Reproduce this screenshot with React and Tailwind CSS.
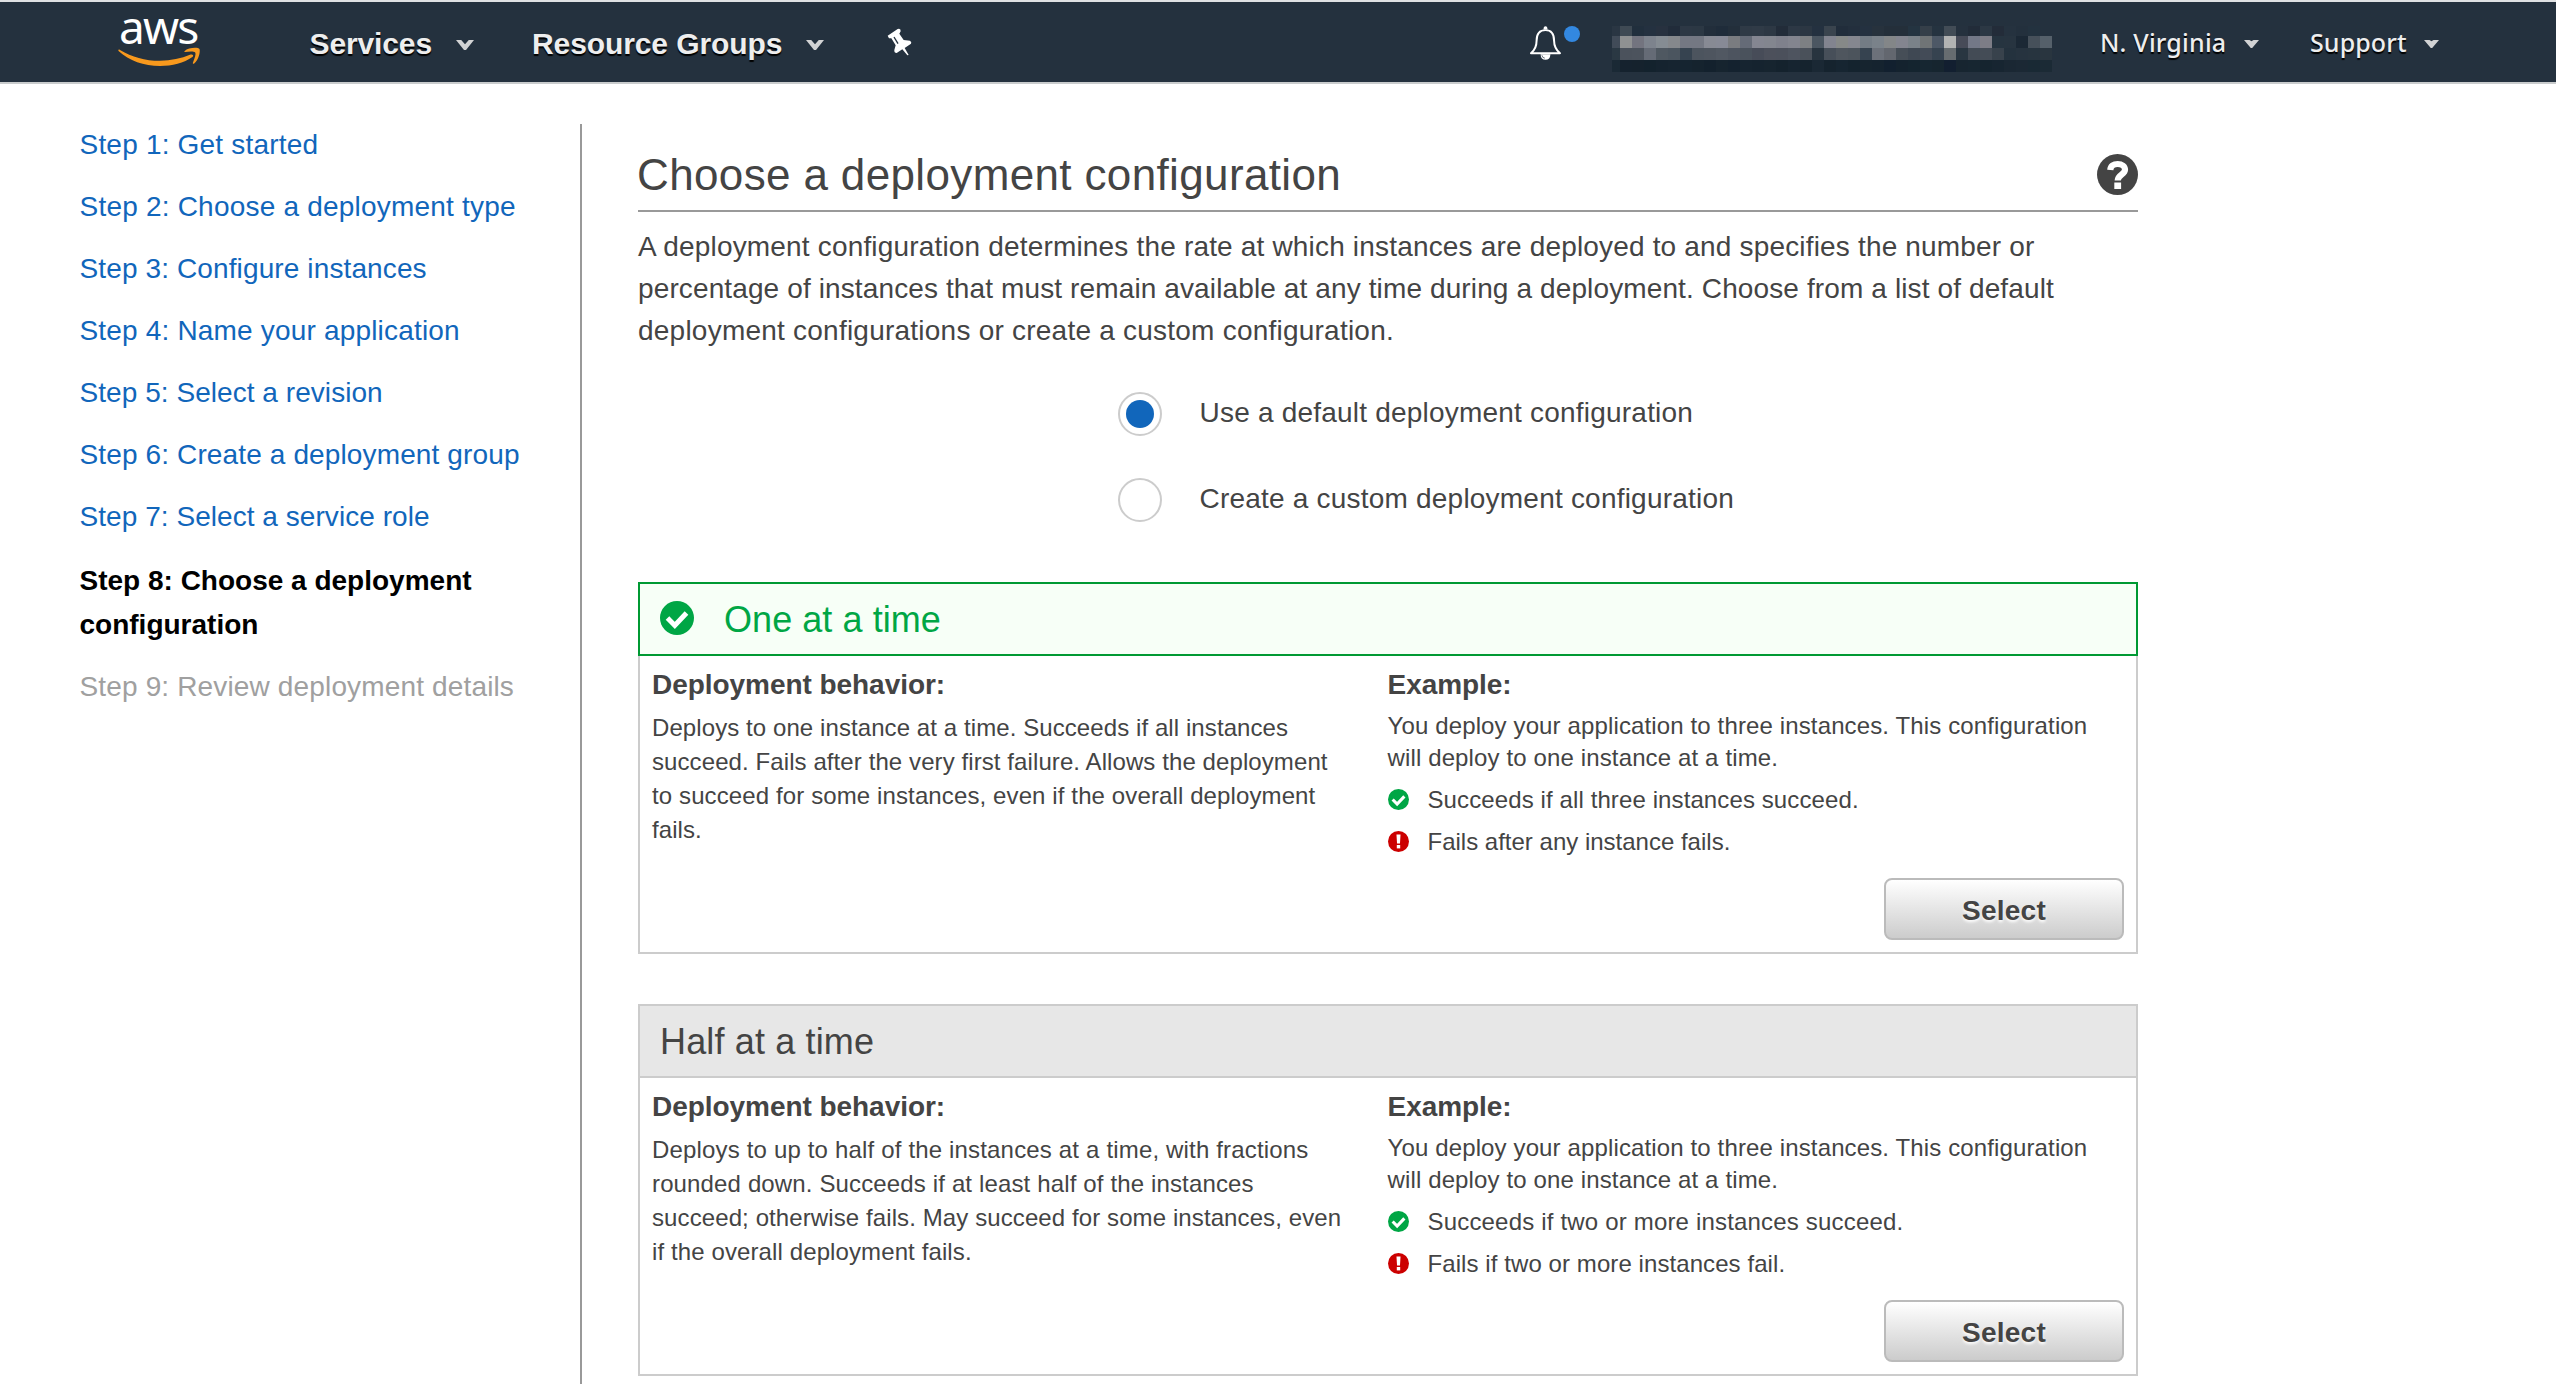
import React from "react";

const TOP = ["#2a3643","#3f4a54","#212f3d","#243140","#27313f","#212c3a","#2d3845","#2c3844","#222e3b","#1f2c3a","#232f3b","#2f3a46","#303b47","#2d3844","#222c39","#2d3845","#2c3743","#243140","#3a444e","#212d3b","#232f3d","#243140","#27323d","#242f3a","#242f3a","#243441","#353f49","#253340","#424c56","#25313e","#222c39","#2c3844","#232c39","#25323f","#23303d","#23323f","#24313e"];
const MID = ["#414b58","#8f9192","#73747f","#7d838d","#858c93","#85888c","#747883","#747883","#878a94","#878a96","#7a7c80","#656b77","#848691","#83868f","#7f818c","#83858f","#7d8083","#4b5661","#82848f","#868988","#85878f","#737c85","#7a828a","#838688","#83858f","#7a8289","#707476","#4d5866","#b2b3b3","#474b58","#737887","#7d7d86","#263440","#273440","#1b2835","#46505a","#55606a"];
const LOW = ["#2a3843","#4b525c","#4c535d","#656b76","#4f5861","#4b555f","#364350","#4c545e","#4e555f","#515862","#4d545f","#4a525c","#474c58","#4c505b","#4b505b","#4e545f","#4a515a","#28343f","#474f59","#4f565e","#4c545c","#364350","#6c717a","#63676f","#464e57","#3f4853","#434b57","#364350","#666c70","#293641","#434b55","#444c56","#38424c","#24323e","#26333f","#27343f","#29353f"];
const BOT = ["#1a2935","#15222e","#15222d","#13222d","#15232f","#162430","#152430","#15232e","#13212d","#16242f","#14222f","#162430","#15232f","#16242f","#14222d","#162430","#15232e","#1a2834","#15232e","#162531","#14232e","#16242f","#15232f","#12202f","#14222e","#14242f","#162631","#16252f","#121f30","#172530","#172631","#15242f","#172531","#1a2733","#1b2834","#192934","#1b2a35"];

function Mosaic() {
  return (
    <div className="mt-6 ml-8 h-[46px] w-[440px] shrink-0">
      {[TOP, MID, LOW, BOT].map((row, r) => (
        <div key={r} className={r === 0 ? "flex h-[10px]" : "flex h-3"}>
          {row.map((c, i) => (
            <div key={i} className={i === 0 ? "h-full w-2" : "h-full w-3"} style={{ backgroundColor: c }} />
          ))}
        </div>
      ))}
    </div>
  );
}

function Logo() {
  return (
    <div className="flex h-[80px] w-[84px] shrink-0 flex-col [text-shadow:none]">
      <div className="h-[41px] pl-[1px] font-['Noto_Sans',sans-serif] text-[46px] leading-[48px] tracking-[-1.900px] whitespace-nowrap text-white">aws</div>
      <svg className="mt-[3px] shrink-0" width="84" height="22" viewBox="0 30 84 22">
        <g fill="#f8991d">
          <path d="M.3 34.400C.2 33.500 1 33.300 2 33.900 14 41 27 44.800 42 44.800 53 44.800 63 42.600 72.600 38.600 74.600 37.800 76.200 39.600 74.400 41 66 47 54 50 42 50 26 50 11 44.500 .8 35.200Z" />
          <path d="M66.500 35.200C70 31.600 80 31 81.500 33 82.600 36 80.500 44 76.200 47.400 75.200 48 74.500 47.500 75 46.400 76.500 43 78.200 38 77.200 36.600 75.800 35 70.500 35.700 67.200 36 66.300 36 66 35.800 66.500 35.200Z" />
        </g>
      </svg>
    </div>
  );
}

function NavCaret() {
  return (
    <svg className="mt-[38px] shrink-0" width="18" height="10" viewBox="0 0 18 10">
      <path d="M0 0H5.200L9 4.200 12.800 0H18L10 10H8Z" fill="#d2d3d4" />
    </svg>
  );
}

function SmallCaret() {
  return (
    <svg className="mt-[38px] shrink-0" width="15" height="8" viewBox="0 0 15 8">
      <path d="M0 0H5.500L7.500 1.200 9.500 0H15L8.200 8H6.800Z" fill="#d2d3d4" />
    </svg>
  );
}

function Pin() {
  return (
    <svg className="mt-[26px] ml-[62.500px] shrink-0" width="25" height="28" viewBox="320 84 75 84">
      <path d="M322 107L352 87Q362 84 361 94L357 101 370 120 389 122Q395 126 392 131L373 144 385 165 381 166 366 148 349 159Q341 159 342 150L346 136 333 115 326 115Z" fill="#fff" />
      <path d="M341 111L353 131" stroke="#24313e" strokeWidth="4" fill="none" />
    </svg>
  );
}

function Bell() {
  return (
    <svg className="mt-[23px] shrink-0" width="33" height="36" viewBox="28 75 100 108">
      <path d="M34 160C46 150 51 140 51 122 51 100 61 90 78 90 95 90 104 100 104 122 104 140 110 150 122 160Z" fill="none" stroke="#fff" strokeWidth="6" strokeLinejoin="round" />
      <path d="M72 88Q72 78 78 78 84 78 84 88Z" fill="#fff" />
      <path d="M63 163H93Q92 180 78 180 64 180 63 163Z" fill="#fff" />
      <path d="M67 166Q68 174 76 175" stroke="#24313e" strokeWidth="2" fill="none" />
    </svg>
  );
}

function Header() {
  return (
    <header className="flex h-[84px] items-start border-t-2 border-b-2 border-t-[#dfe1e3] border-b-[#c9cccd] bg-[#24313e] pr-[117.500px] pl-[118px] text-[#eeeeee] [text-shadow:0_2px_1px_#000]">
      <Logo />
      <div className="ml-[107.500px] w-[146.500px] text-[30px] leading-[84px] font-bold tracking-[-0.12px]">Services</div>
      <NavCaret />
      <div className="ml-[58px] w-[274px] text-[30px] leading-[84px] font-bold tracking-[-0.1px] whitespace-nowrap">Resource Groups</div>
      <NavCaret />
      <Pin />
      <div className="ml-auto flex items-start font-['Noto_Sans',sans-serif] text-[25px] leading-[80px] whitespace-nowrap">
        <Bell />
        <span className="mt-6 ml-[2px] size-4 shrink-0 rounded-full bg-[#3388e0]" />
        <Mosaic />
        <div className="ml-[48.500px] w-[143.500px] font-medium tracking-[0.2px]">N. Virginia</div>
        <SmallCaret />
        <div className="ml-[51.500px] w-[113.500px] font-medium tracking-[0.1px]">Support</div>
        <SmallCaret />
      </div>
    </header>
  );
}

const STEPS = [
  ["Step 1: Get started", "tracking-[0.2px]"],
  ["Step 2: Choose a deployment type", "tracking-[0.21px]"],
  ["Step 3: Configure instances", "tracking-[0.12px]"],
  ["Step 4: Name your application", "tracking-[0.18px]"],
  ["Step 5: Select a revision", "tracking-[0.05px]"],
  ["Step 6: Create a deployment group", "tracking-[0.13px]"],
  ["Step 7: Select a service role", "tracking-[0.05px]"],
];

function Sidebar() {
  return (
    <nav className="flex w-[580px] shrink-0 flex-col pt-[30px] pl-[79.500px] text-[28px] leading-[44px]">
      {STEPS.map(([label, tracking]) => (
        <a key={label} className={`py-[9px] text-[#1166bb] ${tracking}`}>{label}</a>
      ))}
      <div className="mt-0.5 py-[9px] font-bold text-black">
        Step 8: Choose a deployment
        <br />
        configuration
      </div>
      <div className="py-[9px] tracking-[0.15px] text-[#a0a0a0]">Step 9: Review deployment details</div>
    </nav>
  );
}

function CheckIcon({ className }) {
  return (
    <svg className={className} viewBox="0 0 34 34">
      <circle cx="17" cy="17" r="17" fill="#00a645" />
      <path d="M7.500 17L14.800 24.500 26.500 12" fill="none" stroke="#fff" strokeWidth="5" />
    </svg>
  );
}

function AlertIcon({ className }) {
  return (
    <svg className={className} viewBox="0 0 21 21">
      <circle cx="10.500" cy="10.500" r="10.500" fill="#cc0000" />
      <path d="M8.500 3.500H12.500L12 12.500H9Z" fill="#fff" />
      <rect x="8.800" y="14" width="3.400" height="3.400" fill="#fff" />
    </svg>
  );
}

function HelpIcon() {
  return (
    <svg className="mt-[5px] shrink-0" width="41" height="41" viewBox="0 0 41 41">
      <circle cx="20.500" cy="20.500" r="20.500" fill="#444" />
      <path d="M13.300 16C13.500 12 16.500 10 20.700 10 25 10 28 12.300 28 15.800 28 20.400 20.700 20.600 20.700 26.500" fill="none" stroke="#fff" strokeWidth="6.200" />
      <rect x="17.300" y="28.500" width="6.800" height="6.500" fill="#fff" />
    </svg>
  );
}

function Radio({ checked, label }) {
  return (
    <label className="flex h-11 items-start">
      <span className="flex size-11 shrink-0 items-center justify-center rounded-full border-2 border-[#cccccc] bg-white">
        {checked && <span className="size-7 rounded-full bg-[#1166bb]" />}
      </span>
      <span className="ml-[37.500px] leading-[42px] tracking-[0.21px] whitespace-nowrap">{label}</span>
    </label>
  );
}

function Line({ line }) {
  return <div className={`whitespace-nowrap ${line[1]}`}>{line[0]}</div>;
}

function Card({ title, titleTracking, selected, behavior, success, failure }) {
  return (
    <section className="h-[372px]">
      <div
        className={`flex h-[74px] items-start border-2 pl-5 text-[36px] leading-[71px] ${
          selected
            ? "border-[#009933] bg-[#f7fff7] text-[#00a645]"
            : "border-[#cccccc] bg-[#e7e7e7] text-[#444]"
        }`}
      >
        {selected && <CheckIcon className="mt-[17px] mr-[30px] size-[34px]" />}
        <h2 className={titleTracking}>{title}</h2>
      </div>
      <div className="flex h-[298px] border-2 border-t-0 border-[#cccccc] pt-[9px] pr-3 pl-3 text-2xl">
        <div className="w-[735.500px] shrink-0">
          <h3 className="text-[28px] leading-10 font-bold tracking-[-0.05px]">Deployment behavior:</h3>
          <div className="mt-1.5 leading-[34px]">
            {behavior.map((l) => <Line key={l[0]} line={l} />)}
          </div>
        </div>
        <div className="flex flex-1 flex-col leading-8">
          <h3 className="text-[28px] leading-10 font-bold tracking-[-0.05px]">Example:</h3>
          <div className="mt-[5px] whitespace-nowrap tracking-[0.132px]">
            You deploy your application to three instances. This configuration
            <br />
            will deploy to one instance at a time.
          </div>
          <div className="mt-2.5 flex items-start">
            <CheckIcon className="mt-[5px] mr-[19px] size-[21px]" />
            <Line line={success} />
          </div>
          <div className="mt-2.5 flex items-start">
            <AlertIcon className="mt-[5px] mr-[19px] size-[21px]" />
            <Line line={failure} />
          </div>
          <button className="mt-5 h-[62px] w-60 self-end rounded-lg border-2 border-[#bbbbbb] bg-linear-to-b from-white to-[#cccccc] pt-px text-[28px] leading-[60px] font-bold tracking-[0.25px] [text-shadow:0_2px_3px_#fff]">
            Select
          </button>
        </div>
      </div>
    </section>
  );
}

export default function App() {
  return (
    <div className="flex h-[1384px] w-[2556px] flex-col overflow-hidden bg-white font-['Liberation_Sans',Arial,sans-serif]">
      <Header />
      <div className="flex flex-1">
        <Sidebar />
        <main className="mt-10 flex-1 border-l-2 border-[#999999] pl-14 text-[28px] text-[#444]">
          <div className="w-[1500px]">
            <div className="flex h-[88px] items-start justify-between border-b-2 border-[#999999] pt-[25px]">
              <h1 className="-ml-px text-[44px] leading-[52px] tracking-[0.36px]">Choose a deployment configuration</h1>
              <HelpIcon />
            </div>
            <div className="mt-3.5 leading-[42px] whitespace-nowrap">
              <div className="tracking-[0.175px]">A deployment configuration determines the rate at which instances are deployed to and specifies the number or</div>
              <div className="tracking-[0.12px]">percentage of instances that must remain available at any time during a deployment. Choose from a list of default</div>
              <div className="tracking-[0.23px]">deployment configurations or create a custom configuration.</div>
            </div>
            <div className="mt-10 ml-[480px] flex flex-col gap-[42px]">
              <Radio checked label="Use a default deployment configuration" />
              <Radio label="Create a custom deployment configuration" />
            </div>
            <div className="mt-[60px] flex flex-col gap-[50px]">
              <Card
                selected
                title="One at a time"
                titleTracking="tracking-[0.06px]"
                behavior={[
                  ["Deploys to one instance at a time. Succeeds if all instances", "tracking-[0.085px]"],
                  ["succeed. Fails after the very first failure. Allows the deployment", "tracking-[0.09px]"],
                  ["to succeed for some instances, even if the overall deployment", "tracking-[0.115px]"],
                  ["fails.", "tracking-[0.06px]"],
                ]}
                success={["Succeeds if all three instances succeed.", "tracking-[0.107px]"]}
                failure={["Fails after any instance fails.", "tracking-normal"]}
              />
              <Card
                title="Half at a time"
                titleTracking="tracking-[0.15px]"
                behavior={[
                  ["Deploys to up to half of the instances at a time, with fractions", "tracking-[0.169px]"],
                  ["rounded down. Succeeds if at least half of the instances", "tracking-[0.142px]"],
                  ["succeed; otherwise fails. May succeed for some instances, even", "tracking-[0.1px]"],
                  ["if the overall deployment fails.", "tracking-[0.11px]"],
                ]}
                success={["Succeeds if two or more instances succeed.", "tracking-[0.182px]"]}
                failure={["Fails if two or more instances fail.", "tracking-[0.08px]"]}
              />
            </div>
          </div>
        </main>
      </div>
    </div>
  );
}
